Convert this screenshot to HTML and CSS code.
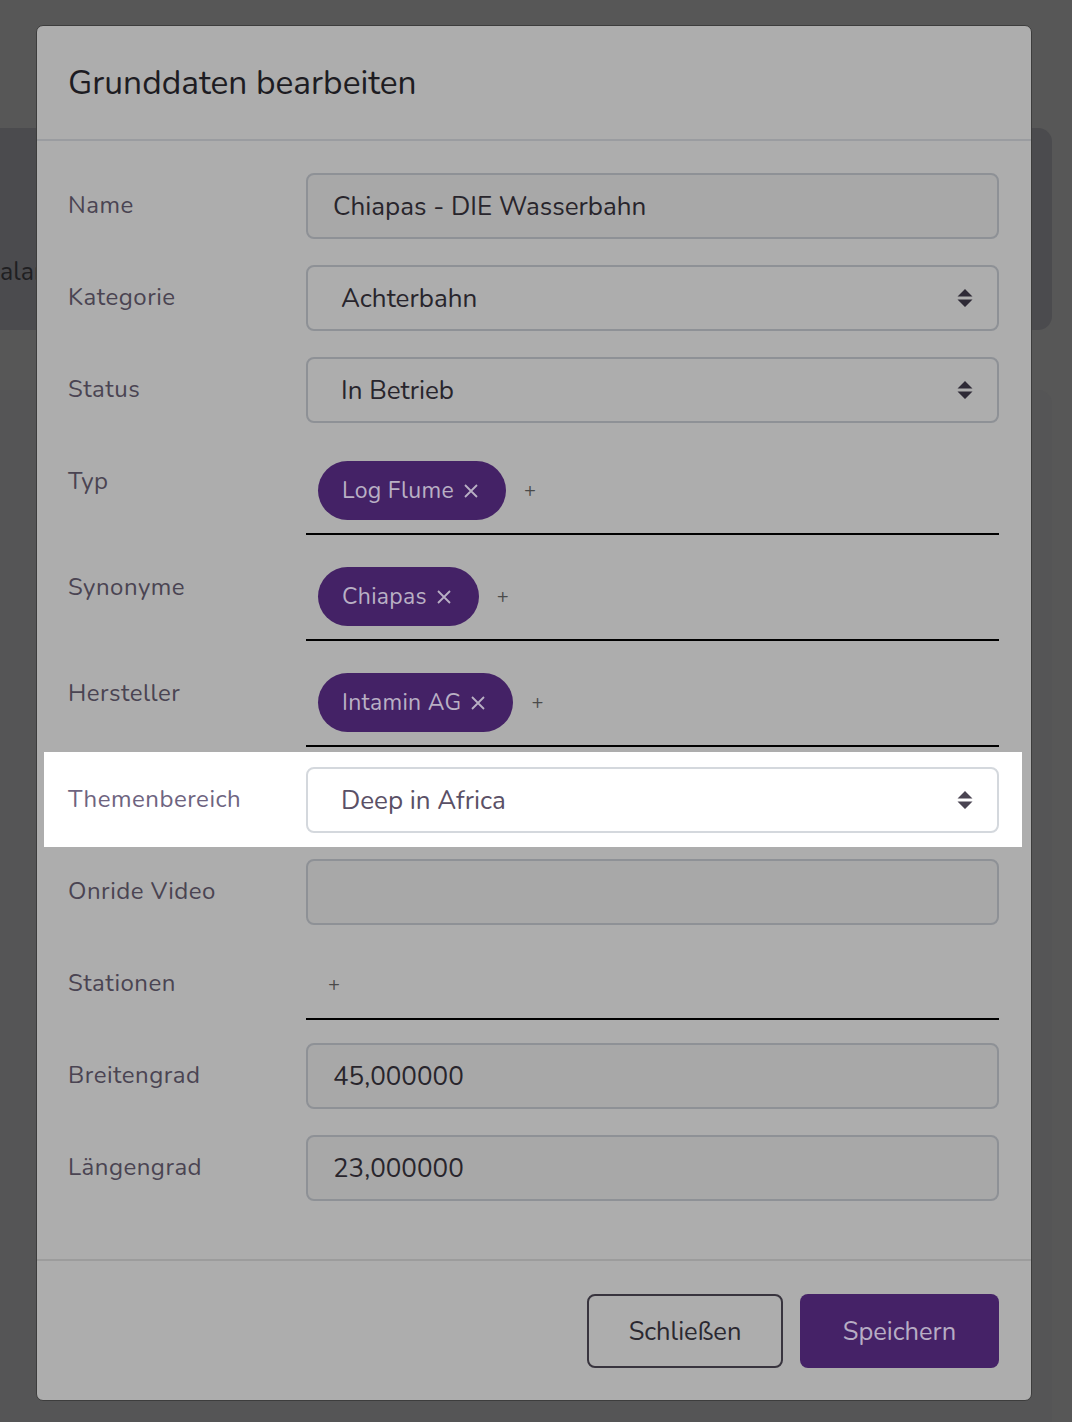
FILE: index.html
```html
<!DOCTYPE html>
<html lang="de">
<head>
    <meta charset="UTF-8">
    <meta name="viewport" content="width=device-width, initial-scale=1.0">
    <title>Grunddaten bearbeiten</title>
    <link rel="stylesheet" href="styles.css">
</head>
<body>
    <div class="page">
        <div class="card-back">
            <span class="card-back-text">alarm</span>
        </div>
        <div class="card-back card-back-second"></div>
    </div>

    <div class="modal">
        <div class="modal-header">
            <h2 class="modal-title">Grunddaten bearbeiten</h2>
        </div>

        <div class="modal-body">
            <div class="row">
                <label class="row-label">Name</label>
                <div class="field input">Chiapas - DIE Wasserbahn</div>
            </div>

            <div class="row">
                <label class="row-label">Kategorie</label>
                <div class="field select">
                    <span>Achterbahn</span>
                    <svg class="arrows" width="16" height="20" viewBox="0 0 16 20"><path d="M8 1 L15.5 8.5 H0.5 Z M8 19 L15.5 11.5 H0.5 Z"/></svg>
                </div>
            </div>

            <div class="row">
                <label class="row-label">Status</label>
                <div class="field select">
                    <span>In Betrieb</span>
                    <svg class="arrows" width="16" height="20" viewBox="0 0 16 20"><path d="M8 1 L15.5 8.5 H0.5 Z M8 19 L15.5 11.5 H0.5 Z"/></svg>
                </div>
            </div>

            <div class="row row-tags">
                <label class="row-label">Typ</label>
                <div class="tags">
                    <span class="chip">Log Flume
                        <svg class="chip-x" width="16" height="16" viewBox="0 0 16 16"><path d="M2 2 L14 14 M14 2 L2 14"/></svg>
                    </span>
                    <span class="add">+</span>
                </div>
            </div>

            <div class="row row-tags">
                <label class="row-label">Synonyme</label>
                <div class="tags">
                    <span class="chip">Chiapas
                        <svg class="chip-x" width="16" height="16" viewBox="0 0 16 16"><path d="M2 2 L14 14 M14 2 L2 14"/></svg>
                    </span>
                    <span class="add">+</span>
                </div>
            </div>

            <div class="row row-tags">
                <label class="row-label">Hersteller</label>
                <div class="tags">
                    <span class="chip">Intamin AG
                        <svg class="chip-x" width="16" height="16" viewBox="0 0 16 16"><path d="M2 2 L14 14 M14 2 L2 14"/></svg>
                    </span>
                    <span class="add">+</span>
                </div>
            </div>

            <div class="row row-spot">
                <label class="row-label">Themenbereich</label>
                <div class="field select">
                    <span>Deep in Africa</span>
                    <svg class="arrows" width="16" height="20" viewBox="0 0 16 20"><path d="M8 1 L15.5 8.5 H0.5 Z M8 19 L15.5 11.5 H0.5 Z"/></svg>
                </div>
            </div>

            <div class="row">
                <label class="row-label">Onride Video</label>
                <div class="field input"></div>
            </div>

            <div class="row row-tags row-empty">
                <label class="row-label">Stationen</label>
                <div class="tags">
                    <span class="add">+</span>
                </div>
            </div>

            <div class="row">
                <label class="row-label">Breitengrad</label>
                <div class="field input">45,000000</div>
            </div>

            <div class="row">
                <label class="row-label">Längengrad</label>
                <div class="field input">23,000000</div>
            </div>
        </div>

        <div class="modal-footer">
            <button class="btn btn-outline">Schließen</button>
            <button class="btn btn-primary">Speichern</button>
        </div>
    </div>
</body>
</html>
```

FILE: styles.css
```css
* {
  box-sizing: border-box;
  font-family: 'Nunito', 'Lato', 'Noto Sans', sans-serif;
}

body {
    margin: 0;
    background-color: #575757;
    min-height: 1422px;
    position: relative;
    overflow: hidden;
}

.page {
    padding-top: 128px;
}

.card-back {
    height: 202px;
    margin-right: 20px;
    background-color: #4b4b4e;
    border-radius: 0 14px 14px 0;
}

.card-back-text {
    display: block;
    padding-top: 128px;
    line-height: 32px;
    font-size: 25px;
    color: #1f1f22;
}

.card-back-second {
    margin-top: 60px;
    height: 1100px;
    background-color: #555556;
}

.modal {
    position: absolute;
    top: 25px;
    left: 36px;
    width: 996px;
    background-color: #adadad;
    border: 1px solid #3d3d3d;
    border-radius: 7px;
}

.modal-header {
    height: 115px;
    padding: 0 31px;
    display: flex;
    align-items: center;
    border-bottom: 2px solid #9a9ca0;
}

.modal-title {
    margin: 0;
    font-size: 33.5px;
    font-weight: 400;
    color: #1d1c22;
}

.modal-body {
    padding: 32px 32px 32px 31px;
}

.row {
    display: flex;
    margin-bottom: 26px;
}

.row-label {
    width: 238px;
    flex-shrink: 0;
    font-size: 24px;
    letter-spacing: 0.5px;
    line-height: 28px;
    color: #4a4452;
    padding-top: 18px;
}

.field {
    flex: 1;
    height: 66px;
    border: 2px solid #8e9196;
    border-radius: 8px;
    font-size: 26px;
    color: #28252c;
    display: flex;
    align-items: center;
}

.input {
    background-color: #a8a8a8;
    padding-left: 25px;
}

.select {
    padding: 0 24px 0 33px;
    justify-content: space-between;
}

.arrows {
    fill: #2e2a36;
}

.row-tags {
    margin-bottom: 20px;
}

.row-empty {
    margin-bottom: 23px;
}

.tags {
    flex: 1;
    display: flex;
    align-items: center;
    gap: 12px;
    min-height: 69px;
    padding: 12px 12px 13px 12px;
    border-bottom: 2px solid #000;
}

.row-empty .tags {
    padding-left: 16px;
}

.chip {
    height: 59px;
    padding: 0 27px 0 24px;
    border-radius: 30px;
    background-color: #442266;
    color: #b9b0c4;
    font-size: 23px;
    letter-spacing: 0.3px;
    display: flex;
    align-items: center;
    gap: 9px;
}

.chip-x {
    stroke: #b9b0c4;
    stroke-width: 1.8;
}

.add {
    width: 24px;
    height: 42px;
    display: flex;
    align-items: center;
    justify-content: center;
    font-size: 20px;
    color: #4a4a4a;
}

.row-spot {
    background-color: #ffffff;
    margin: -15px -23px 12px -24px;
    padding: 15px 23px 14px 24px;
}

.row-spot .row-label {
    color: #6e6480;
}

.row-spot .field {
    border-color: #d4d8dd;
    color: #5a5066;
}

.row-spot .arrows {
    fill: #4a4452;
}

.modal-footer {
    border-top: 2px solid #9c9c9c;
    padding: 33px 32px 32px 32px;
    display: flex;
    justify-content: flex-end;
    gap: 17px;
}

.btn {
    height: 74px;
    border-radius: 8px;
    font-size: 25.5px;
    cursor: pointer;
}

.btn-outline {
    width: 196px;
    background: none;
    border: 2px solid #38343e;
    color: #2b2830;
}

.btn-primary {
    width: 199px;
    background-color: #452267;
    border: none;
    color: #b7adc4;
}
```
